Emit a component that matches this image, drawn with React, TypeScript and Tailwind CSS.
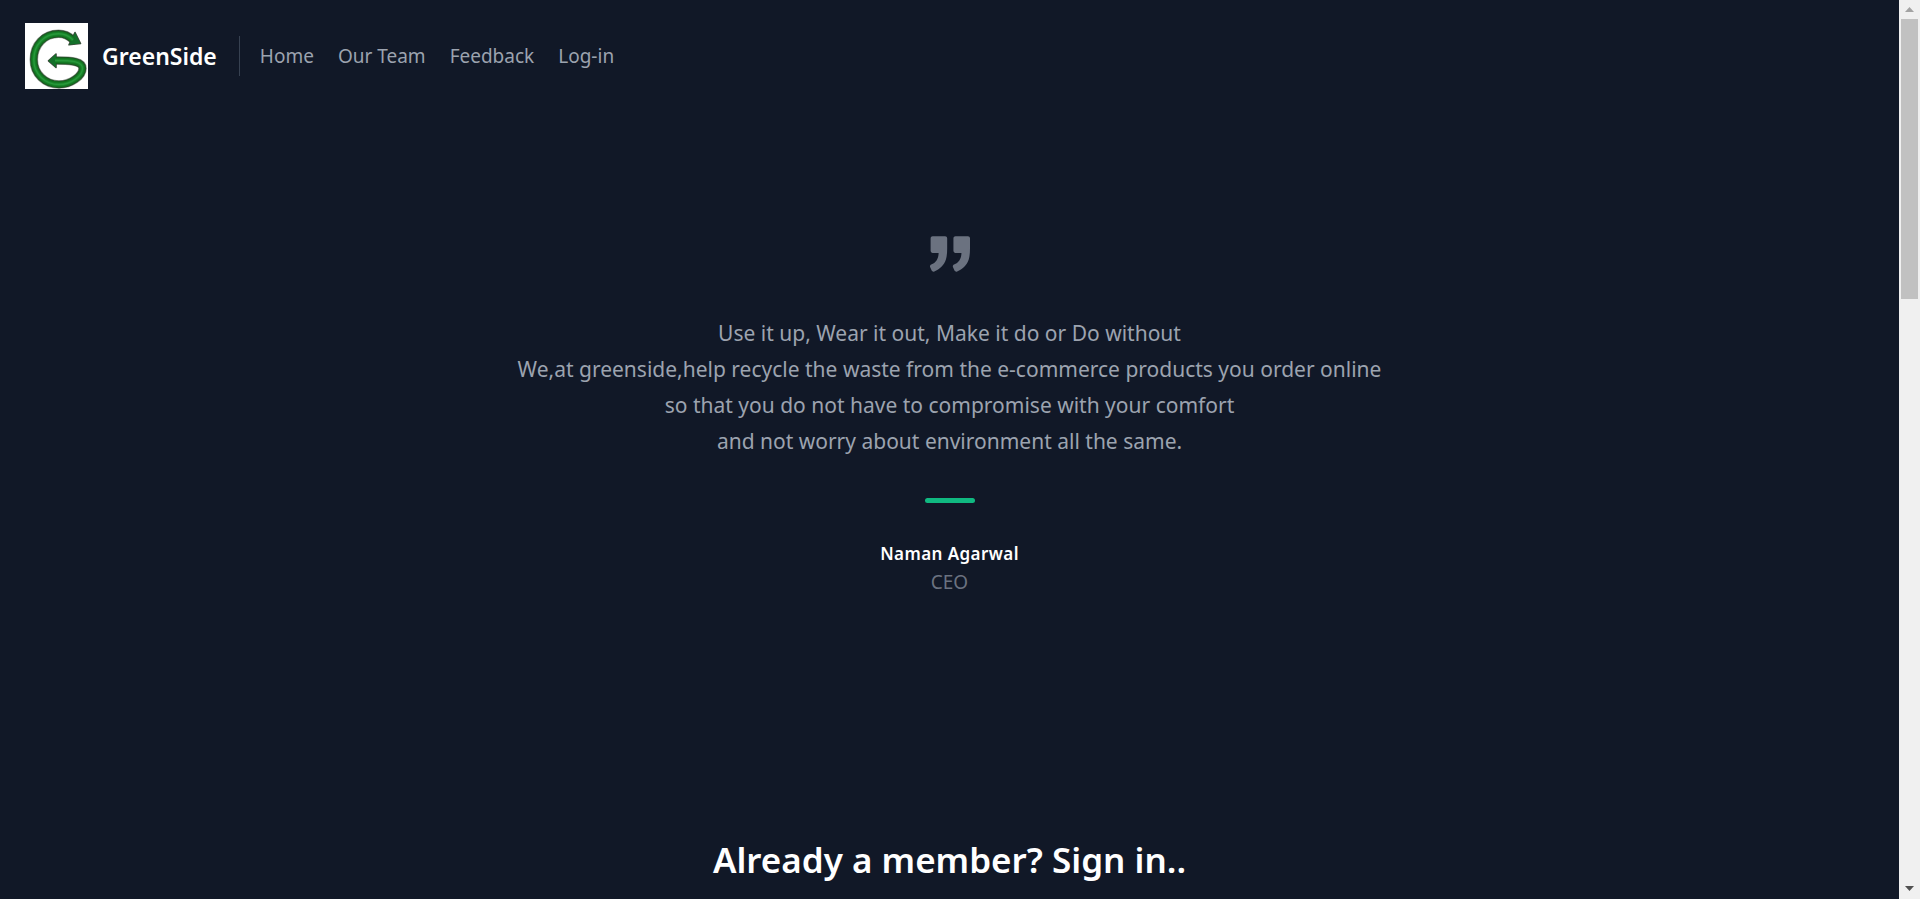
const links = ["Home", "Our Team", "Feedback", "Log-in"];

const quote = [
  "Use it up, Wear it out, Make it do or Do without",
  "We,at greenside,help recycle the waste from the e-commerce products you order online",
  "so that you do not have to compromise with your comfort",
  "and not worry about environment all the same.",
];

const ring =
  "M48 17 C44 13 39 10.800 33.500 10.800 C19 10.800 8.800 22 8.800 36.500 C8.800 51 20 61.500 34 61.500 C46 61.500 57.500 53 57.500 45.500 C57.500 38.500 48 37.500 30 37.500";
const heads = "M50 9.500 L55.500 20.500 L44 21.800 Z M31 31 L23.500 37.800 L31 44.500 Z";

function Logo() {
  return (
    <svg viewBox="0 0 63 66" className="h-[66px] w-[63px] bg-white" role="img" aria-label="GreenSide logo">
      <g fill="none" strokeLinejoin="round">
        <path d={ring} stroke="#9aa39a" strokeWidth="8.6" />
        <path d={heads} stroke="#3d4a3c" strokeWidth="1.6" fill="#3d4a3c" />
        <path d={ring} stroke="#234a26" strokeWidth="7.4" />
        <path d={heads} fill="#14702a" />
        <path d={ring} stroke="#12721f" strokeWidth="5.8" />
        <path d={ring} stroke="#18832a" strokeWidth="3.4" />
        <path d={ring} stroke="#27983a" strokeWidth="1.4" />
      </g>
    </svg>
  );
}

function Header() {
  return (
    <header className="flex items-center px-[25px] pt-[23px]">
      <a href="#top" className="flex items-center gap-3.5 text-[23px] font-semibold text-white">
        <Logo />
        GreenSide
      </a>
      <nav className="ml-[22px] flex h-10 items-center gap-6 border-l border-[#374151] pl-5 text-[19px]">
        {links.map((link) => (
          <a key={link} href="#top" className="hover:text-white">
            {link}
          </a>
        ))}
      </nav>
    </header>
  );
}

function Testimonial() {
  return (
    <section className="flex flex-col items-center pt-[145px] text-center">
      <svg viewBox="0 0 975.036 975.036" fill="currentColor" className="size-10 text-[#6b7280]" aria-hidden="true">
        <path d="M925.036 57.197h-304c-27.6 0-50 22.4-50 50v304c0 27.601 22.4 50 50 50h145.5c-1.9 79.601-20.4 143.3-55.4 191.2-27.6 37.8-69.399 69.1-125.3 93.8-25.7 11.3-36.8 41.7-24.8 67.101l36 76c11.6 24.399 40.3 35.1 65.1 24.399 66.2-28.6 122.101-64.8 167.7-108.8 55.601-53.7 93.7-114.3 114.3-181.9 20.601-67.6 30.9-159.8 30.9-276.8v-239c0-27.599-22.401-50-50-50zM106.036 913.497c65.4-28.5 121-64.699 166.9-108.6 56.1-53.7 94.4-114.1 115-181.2 20.6-67.1 30.899-159.6 30.899-277.5v-239c0-27.6-22.399-50-50-50h-304c-27.6 0-50 22.4-50 50v304c0 27.601 22.4 50 50 50h145.5c-1.9 79.601-20.4 143.3-55.4 191.2-27.6 37.8-69.4 69.1-125.3 93.8-25.7 11.3-36.8 41.7-24.8 67.101l35.9 75.8c11.601 24.399 40.501 35.2 65.301 24.399z" />
      </svg>
      <p className="mt-[41px] text-[21px] leading-9">
        {quote.map((line) => (
          <span key={line} className="block">
            {line}
          </span>
        ))}
      </p>
      <span className="mt-[39px] h-[5px] w-[50px] rounded-sm bg-[#10b981]" />
      <h2 className="mt-[37px] text-[17px] leading-7 font-semibold tracking-wide text-white">Naman Agarwal</h2>
      <p className="text-[19px] leading-7 text-[#6b7280]">CEO</p>
    </section>
  );
}

function Scrollbar() {
  return (
    <div className="sticky top-0 flex h-screen w-[21px] shrink-0 flex-col items-center bg-[#f0f0f0]" aria-hidden="true">
      <svg viewBox="0 0 21 19" className="h-[19px] w-[21px] shrink-0">
        <path d="M6 12 L10.500 7 L15 12 Z" fill="#a3a3a3" />
      </svg>
      <div className="h-[280px] w-[17px] bg-[#c1c1c1]" />
      <svg viewBox="0 0 21 19" className="mt-auto h-[19px] w-[21px] shrink-0">
        <path d="M6 6 L15 6 L10.500 11 Z" fill="#505050" />
      </svg>
    </div>
  );
}

export default function App() {
  return (
    <div id="top" className="flex min-h-screen bg-[#111827] font-['Noto_Sans','Open_Sans',sans-serif] text-[#9ca3af]">
      <main className="flex-1">
        <Header />
        <Testimonial />
        <h1 className="pt-60 text-center text-[35px] leading-12 font-semibold text-white">Already a member? Sign in..</h1>
      </main>
      <Scrollbar />
    </div>
  );
}
